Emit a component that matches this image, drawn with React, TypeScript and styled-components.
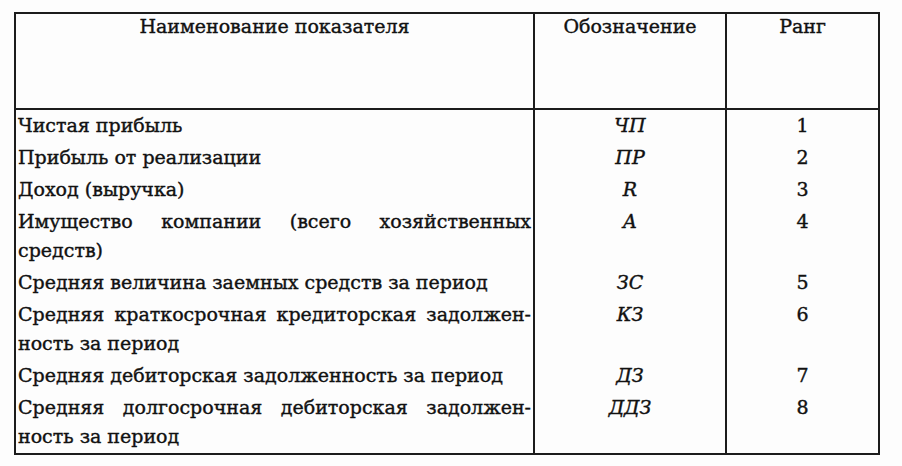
import * as React from "react";
import styled, { createGlobalStyle } from "styled-components";

const GlobalStyle = createGlobalStyle`
  html, body {
    margin: 0;
    padding: 0;
    background: #ffffff;
  }
  body {
    font-family: "DejaVu Serif", "Liberation Serif", serif;
    color: #111111;
  }
`;

const Page = styled.div`
  width: 902px;
  height: 466px;
  padding: 12px 0 0 14px;
  box-sizing: border-box;
  background: #fdfdfd;
`;

const Table = styled.table`
  border-collapse: collapse;
  table-layout: fixed;
  width: 864px;
  font-size: 19px;
  -webkit-text-stroke: 0.4px #111111;
`;

const HeadCell = styled.th<{ $w: number }>`
  width: ${(p) => p.$w}px;
  height: 96px;
  box-sizing: border-box;
  border: 2px solid #1c1c1c;
  vertical-align: top;
  text-align: center;
  font-weight: normal;
  padding: 0;
  line-height: 24px;
`;

const Cell = styled.td<{ $align?: "left" | "center"; $italic?: boolean }>`
  border-left: 2px solid #1c1c1c;
  border-right: 2px solid #1c1c1c;
  vertical-align: top;
  text-align: ${(p) => p.$align ?? "center"};
  font-style: ${(p) => (p.$italic ? "italic" : "normal")};
  padding: 1px ${(p) => (p.$align === "left" ? "2px" : "0")} 2px;
  line-height: 29px;
`;

const Line = styled.div<{ $justify?: boolean }>`
  text-align: ${(p) => (p.$justify ? "justify" : "left")};
  text-align-last: ${(p) => (p.$justify ? "justify" : "left")};
`;

const LastRow = styled.tr`
  td {
    border-bottom: 2px solid #1c1c1c;
  }
`;

type Row = { name: string[]; code: string; rank: string };

const rows: Row[] = [
  { name: ["Чистая прибыль"], code: "ЧП", rank: "1" },
  { name: ["Прибыль от реализации"], code: "ПР", rank: "2" },
  { name: ["Доход (выручка)"], code: "R", rank: "3" },
  {
    name: ["Имущество компании (всего хозяйственных", "средств)"],
    code: "А",
    rank: "4",
  },
  { name: ["Средняя величина заемных средств за период"], code: "ЗС", rank: "5" },
  {
    name: ["Средняя краткосрочная кредиторская задолжен-", "ность за период"],
    code: "КЗ",
    rank: "6",
  },
  { name: ["Средняя дебиторская задолженность за период"], code: "ДЗ", rank: "7" },
  {
    name: ["Средняя долгосрочная дебиторская задолжен-", "ность за период"],
    code: "ДДЗ",
    rank: "8",
  },
];

const RowCells = ({ row }: { row: Row }) => (
  <>
    <Cell $align="left">
      {row.name.map((t, i) => (
        <Line key={i} $justify={row.name.length > 1 && i === 0}>
          {t}
        </Line>
      ))}
    </Cell>
    <Cell $italic>{row.code}</Cell>
    <Cell>{row.rank}</Cell>
  </>
);

const App = () => {
  return (
    <>
      <GlobalStyle />
      <Page>
        <Table>
          <thead>
            <tr>
              <HeadCell $w={519}>Наименование показателя</HeadCell>
              <HeadCell $w={192}>Обозначение</HeadCell>
              <HeadCell $w={153}>Ранг</HeadCell>
            </tr>
          </thead>
          <tbody>
            {rows.map((r, i) =>
              i === rows.length - 1 ? (
                <LastRow key={i}>
                  <RowCells row={r} />
                </LastRow>
              ) : (
                <tr key={i}>
                  <RowCells row={r} />
                </tr>
              )
            )}
          </tbody>
        </Table>
      </Page>
    </>
  );
};

export default App;
